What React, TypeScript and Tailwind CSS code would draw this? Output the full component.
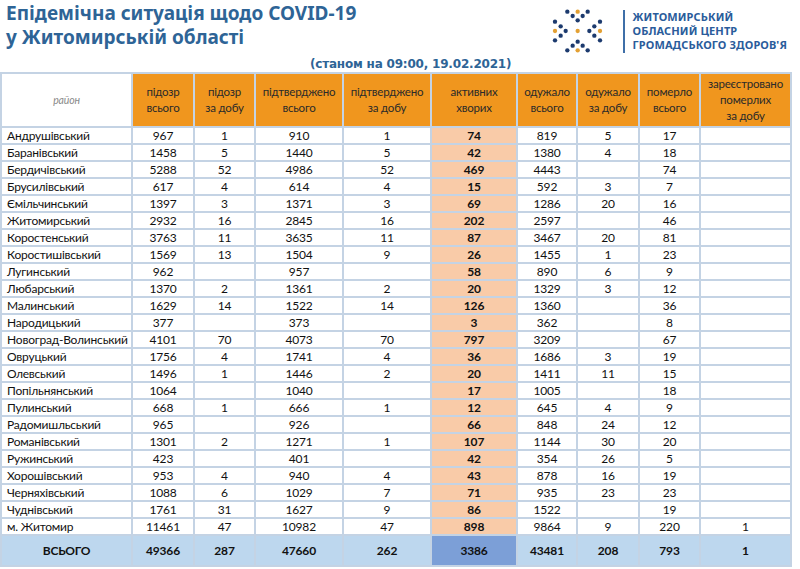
import React from "react";

type Row = [string, ...(string | number)[]];

const rows: Row[] = [
  ["Андрушівський", 967, 1, 910, 1, 74, 819, 5, 17, ""],
  ["Баранівський", 1458, 5, 1440, 5, 42, 1380, 4, 18, ""],
  ["Бердичівський", 5288, 52, 4986, 52, 469, 4443, "", 74, ""],
  ["Брусилівський", 617, 4, 614, 4, 15, 592, 3, 7, ""],
  ["Ємільчинський", 1397, 3, 1371, 3, 69, 1286, 20, 16, ""],
  ["Житомирський", 2932, 16, 2845, 16, 202, 2597, "", 46, ""],
  ["Коростенський", 3763, 11, 3635, 11, 87, 3467, 20, 81, ""],
  ["Коростишівський", 1569, 13, 1504, 9, 26, 1455, 1, 23, ""],
  ["Лугинський", 962, "", 957, "", 58, 890, 6, 9, ""],
  ["Любарський", 1370, 2, 1361, 2, 20, 1329, 3, 12, ""],
  ["Малинський", 1629, 14, 1522, 14, 126, 1360, "", 36, ""],
  ["Народицький", 377, "", 373, "", 3, 362, "", 8, ""],
  ["Новоград-Волинський", 4101, 70, 4073, 70, 797, 3209, "", 67, ""],
  ["Овруцький", 1756, 4, 1741, 4, 36, 1686, 3, 19, ""],
  ["Олевський", 1496, 1, 1446, 2, 20, 1411, 11, 15, ""],
  ["Попільнянський", 1064, "", 1040, "", 17, 1005, "", 18, ""],
  ["Пулинський", 668, 1, 666, 1, 12, 645, 4, 9, ""],
  ["Радомишльський", 965, "", 926, "", 66, 848, 24, 12, ""],
  ["Романівський", 1301, 2, 1271, 1, 107, 1144, 30, 20, ""],
  ["Ружинський", 423, "", 401, "", 42, 354, 26, 5, ""],
  ["Хорошівський", 953, 4, 940, 4, 43, 878, 16, 19, ""],
  ["Черняхівський", 1088, 6, 1029, 7, 71, 935, 23, 23, ""],
  ["Чуднівський", 1761, 31, 1627, 9, 86, 1522, "", 19, ""],
  ["м. Житомир", 11461, 47, 10982, 47, 898, 9864, 9, 220, 1],
];

const total: Row = ["ВСЬОГО", 49366, 287, 47660, 262, 3386, 43481, 208, 793, 1];

const headers = [
  ["підозр", "всього"],
  ["підозр", "за добу"],
  ["підтверджено", "всього"],
  ["підтверджено", "за добу"],
  ["активних", "хворих"],
  ["одужало", "всього"],
  ["одужало", "за добу"],
  ["померло", "всього"],
  ["зареєстровано", "померлих", "за добу"],
];

const D = "#1c3a6e";
const O = "#e3a033";
const dots: [number, number, string][] = [
  [52, 20, D], [83, 20, O], [113, 20, D], [68, 33, D], [98, 33, D], [83, 46, D],
  [83, 110, D], [68, 122, D], [98, 122, D], [52, 136, D], [83, 136, O], [113, 136, D],
  [15, 50, D], [32, 64, D], [15, 78, O], [47, 78, D], [32, 92, D], [15, 106, D],
  [150, 50, D], [133, 64, D], [150, 78, O], [118, 78, D], [133, 92, D], [150, 106, D],
  [83, 78, O],
];

const LogoMark = () => (
  <svg width="55" height="50" viewBox="0 0 165 150">
    {dots.map(([x, y, c], i) => (
      <circle key={i} cx={x} cy={y} r="6.5" fill={c} />
    ))}
  </svg>
);

export default function App() {
  return (
    <div className="w-[800px] h-[569px] bg-white overflow-hidden font-['Lato','Noto_Sans',sans-serif] text-[#111]">
      {/* header */}
      <div className="flex h-[56px]">
        <div className="pl-[6px] pt-[1px] font-['Noto_Sans',sans-serif] font-bold text-[19px] leading-[24px] text-[#2e6496]">
          <div>Епідемічна ситуація щодо COVID-19</div>
          <div>у Житомирській області</div>
        </div>
        <div className="ml-auto flex items-start pt-[5px] pr-[13px]">
          <LogoMark />
          <div className="ml-[18px] mt-[5px] w-[2px] h-[43px] bg-[#3f6fa8]" />
          <div className="ml-[8px] mt-[5px] font-['Noto_Sans',sans-serif] font-bold text-[11px] leading-[14px] text-[#2a5c9b] tracking-[0.1px]">
            <div>ЖИТОМИРСЬКИЙ</div>
            <div>ОБЛАСНИЙ ЦЕНТР</div>
            <div>ГРОМАДСЬКОГО ЗДОРОВ'Я</div>
          </div>
        </div>
      </div>
      <div className="h-[16px] pl-[310px] font-['DejaVu_Sans',sans-serif] font-bold text-[12px] leading-[16px] text-[#2e6496] tracking-[-0.2px]">
        (станом на 09:00, 19.02.2021)
      </div>

      {/* table */}
      <div className="w-[792px] grid grid-cols-[129px_60px_59px_86px_86px_84px_58px_60px_59px_89px] grid-rows-[52px_repeat(24,15px)_29px] gap-[2px] p-[2px] bg-[#c4d3e4] text-[12px] leading-[15px] tracking-[-0.2px]">
        <div className="bg-white flex items-center justify-center italic text-[10.5px] text-[#8a8a8a]">
          район
        </div>
        {headers.map((h, i) => (
          <div
            key={i}
            className="bg-[#f0961e] flex flex-col items-center justify-center text-[11.5px] leading-[16px] text-[#2a2a2a]"
          >
            {h.map((t) => (
              <span key={t}>{t}</span>
            ))}
          </div>
        ))}

        {rows.map((r) =>
          r.map((v, j) => (
            <div
              key={r[0] + j}
              className={
                j === 0
                  ? "bg-white flex items-center pl-[5px] whitespace-nowrap"
                  : j === 5
                  ? "bg-[#f9cba8] flex items-center justify-center font-bold"
                  : "bg-white flex items-center justify-center"
              }
            >
              {v}
            </div>
          ))
        )}

        {total.map((v, j) => (
          <div
            key={"t" + j}
            className={
              j === 5
                ? "bg-[#7c9fd7] flex items-center justify-center font-bold"
                : "bg-[#bdd7ee] flex items-center justify-center font-bold"
            }
          >
            {v}
          </div>
        ))}
      </div>
    </div>
  );
}
